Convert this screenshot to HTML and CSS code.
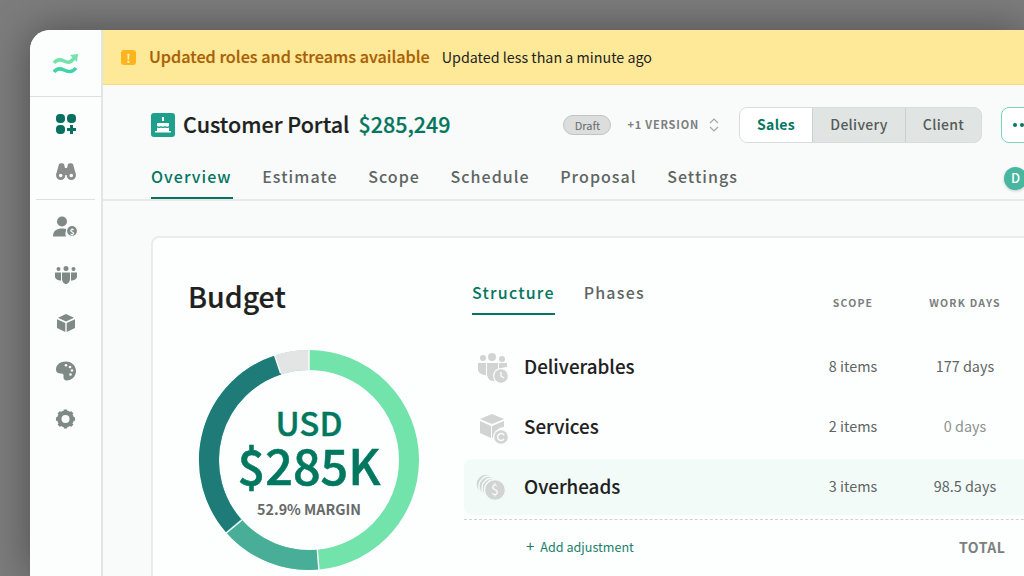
FILE: index.html
```html
<!DOCTYPE html>
<html>
	<head>
		<meta charset="UTF-8">
		<title>Customer Portal</title>
		<link rel="stylesheet" href="styles.css">
	</head>
	<body>
		<div class="window">
			<div class="side">
				<div class="logo">
					<svg width="26" height="22" viewBox="0 0 26 22" fill="none" stroke-width="3.6"><path d="M1 9c3-4 6-4 10-2s7 2 10-3" stroke="#74e2ab"/><path d="M17 1l8-1-1 8z" fill="#74e2ab" stroke="none"/><path d="M1 18c3-4 6-4 10-2s8 3 12-2" stroke="#3fd3aa"/></svg>
				</div>
				<div class="side-group">
					<svg width="20" height="20" viewBox="0 0 20 20" fill="#07705f"><rect x="0" y="0" width="9" height="9" rx="4"/><rect x="11" y="0" width="9" height="9" rx="4"/><rect x="0" y="11" width="9" height="9" rx="4"/><path d="M14 11h3v3h3v3h-3v3h-3v-3h-3v-3h3z"/></svg>
					<svg width="20" height="18" viewBox="0 0 20 18" fill="#8a8d8c"><path d="M3 1c1-1 4-1 5 0l1 4h2l1-4c1-1 4-1 5 0l3 11H0z"/><circle cx="4.700" cy="12.500" r="3.200" fill="#fbfdfd" stroke="#8a8d8c" stroke-width="2.800"/><circle cx="15.300" cy="12.500" r="3.200" fill="#fbfdfd" stroke="#8a8d8c" stroke-width="2.800"/></svg>
				</div>
				<div class="side-group lower">
					<svg width="25" height="21" viewBox="0 0 25 21" fill="#7f8a87"><circle cx="9" cy="5" r="5"/><path d="M0 20c0-6 4-8 9-8 2 0 4 .4 5 1-2 2-2 5-1 7z"/><circle cx="19" cy="14.500" r="5.500" stroke="#fbfdfd" stroke-width="1.200"/><text x="19" y="18" class="mini">$</text></svg>
					<svg width="22" height="18" viewBox="0 0 22 18" fill="#7f8a87"><circle cx="3.500" cy="3" r="2"/><circle cx="11" cy="2.500" r="2.500"/><circle cx="18.500" cy="3" r="2"/><path d="M0 6.500h6v8C3 14.500 0 13 0 10.500zM7 6.500h8V13c0 2.500-2 5-4 5s-4-2.500-4-5zM16 6.500h6v4c0 2.500-3 4-6 4z"/></svg>
					<svg width="18" height="18" viewBox="0 0 18 18" fill="#7f8a87"><path d="M9 0l8 3.700-8 3.700-8-3.700z"/><path d="M0 5.200l8.300 3.800V18L0 14zM18 5.200L9.700 9v9l8.300-4z"/></svg>
					<svg width="20" height="19" viewBox="0 0 20 19"><path d="M10 0C4 0 0 3.500 0 8c0 3 2.500 4 5 4 2 0 3 1 2.500 3-.4 2 1 4 3 4 5.500 0 9.500-4.500 9.500-9.500S16 0 10 0z" fill="#7f8a87"/><g fill="#fbfdfd"><circle cx="10" cy="3.800" r="1.300"/><circle cx="14" cy="5.500" r="1.300"/><circle cx="16" cy="9" r="1.300"/><circle cx="14.500" cy="13" r="1.300"/></g></svg>
					<svg width="21" height="21" viewBox="0 0 22 22"><circle cx="11" cy="11" r="6.500" fill="none" stroke="#7f8a87" stroke-width="4.600"/><path d="M11 1v4M11 17v4M1 11h4M17 11h4M3.900 3.900l2.800 2.800M15.300 15.300l2.800 2.800M3.900 18.100l2.800-2.800M15.300 6.700l2.800-2.800" stroke="#7f8a87" stroke-width="3.600"/></svg>
				</div>
			</div>
			<div class="main">
				<div class="notice">
					<span class="notice-icon">!</span>
					<b>Updated roles and streams available</b>
					<span class="notice-time">Updated less than a minute ago</span>
				</div>
				<div class="head">
					<div class="title-row">
						<span class="project-icon">
							<svg width="16" height="16" viewBox="0 0 16 16" fill="#fff"><rect x="7" y="0" width="2" height="4"/><path d="M2 6h12v3c-1.500 1-2.500 1-4 0-1 1-3 1-4 0-1.500 1-2.500 1-4 0z"/><path d="M2 10.500c1.500.8 2.800.8 4 0 1.200.8 2.800.8 4 0 1.200.8 2.500.8 4 0V14H2z"/><rect x="0" y="14" width="16" height="1.500"/></svg>
						</span>
						<span class="project-name">Customer Portal</span>
						<span class="project-price">$285,249</span>
						<span class="spacer"></span>
						<span class="draft">Draft</span>
						<span class="version">+1 VERSION</span>
						<svg class="updown" width="10" height="14" viewBox="0 0 10 14" fill="none" stroke="#a3a8a6" stroke-width="1.200"><path d="M1 5l4-4 4 4M1 9l4 4 4-4"/></svg>
						<div class="switch">
							<span class="on">Sales</span>
							<span>Delivery</span>
							<span>Client</span>
						</div>
						<div class="more"><i></i><i></i><i></i></div>
					</div>
					<div class="tabs">
						<a class="active">Overview</a>
						<a>Estimate</a>
						<a>Scope</a>
						<a>Schedule</a>
						<a>Proposal</a>
						<a>Settings</a>
						<span class="avatar">D</span>
					</div>
				</div>
				<div class="content">
					<div class="card">
						<div class="budget">
							<h1>Budget</h1>
							<div class="donut">
								<svg width="220" height="220" viewBox="0 0 220 220" fill="none" stroke-width="20">
									<circle cx="110" cy="110" r="100" stroke="#72e3aa"/>
									<path d="M118.700 209.600A100 100 0 0 1 34.500 175.600" stroke="#48ae98"/>
									<path d="M34.500 175.600A100 100 0 0 1 79 14.900" stroke="#1f7b78"/>
									<path d="M79 14.900A100 100 0 0 1 110 10" stroke="#e3e5e4"/>
									<path d="M110 -1V21M118.300 199.500L120 221M43 170L26 184M81.500 23L75.500 5" stroke="#fbfdfd" stroke-width="1.400"/>
								</svg>
								<div class="donut-text">
									<div class="usd">USD</div>
									<div class="total">$285K</div>
									<div class="margin">52.9% MARGIN</div>
								</div>
							</div>
						</div>
						<div class="table">
							<div class="table-top">
								<div class="subtabs">
									<a class="active">Structure</a>
									<a>Phases</a>
								</div>
								<div class="col">SCOPE</div>
								<div class="col">WORK DAYS</div>
							</div>
							<div class="row">
								<svg class="row-icon" width="34" height="36" viewBox="0 0 34 36" fill="#d1d4d3"><circle cx="7" cy="8" r="3"/><circle cx="16" cy="7" r="4"/><circle cx="26" cy="9" r="3"/><path d="M2 13h8v12c-4 0-8-2-8-6zM11 13h11v14c-1 2-2 4-5 4-4 0-6-4-6-8zM23 13h8v4c-3 0-6 1-8 3z"/><circle cx="25" cy="26" r="8" fill="#fbfdfd"/><circle cx="25" cy="26" r="6.800"/><path d="M25 22v4l3 2" stroke="#fbfdfd" stroke-width="1.400" fill="none"/></svg>
								<span class="row-name">Deliverables</span>
								<span class="cell">8 items</span>
								<span class="cell">177 days</span>
							</div>
							<div class="row">
								<svg class="row-icon" width="34" height="36" viewBox="0 0 34 36" fill="#d1d4d3"><path d="M16 4l12 5-12 5-12-5z"/><path d="M4 11l11 5v12l-11-5zM28 11v6c-5 0-9 4-10 10l-2 1V16z"/><circle cx="25" cy="27" r="8" fill="#fbfdfd"/><circle cx="25" cy="27" r="6.800"/><path d="M28 25a3.500 3.500 0 1 0 0 4" stroke="#fbfdfd" stroke-width="1.400" fill="none"/></svg>
								<span class="row-name">Services</span>
								<span class="cell">2 items</span>
								<span class="cell dim">0 days</span>
							</div>
							<div class="row hi">
								<svg class="row-icon" width="34" height="36" viewBox="0 0 34 36" fill="#d1d4d3" stroke="#f3fbf9" stroke-width="1.400"><circle cx="10" cy="13" r="10"/><circle cx="13" cy="15" r="10"/><circle cx="16" cy="17" r="10"/><circle cx="19" cy="19" r="10.500"/><text x="19" y="24" class="mini big">$</text></svg>
								<span class="row-name">Overheads</span>
								<span class="cell">3 items</span>
								<span class="cell">98.5 days</span>
							</div>
							<div class="foot">
								<a class="add"><em>+</em>Add adjustment</a>
								<span class="total-label">TOTAL</span>
							</div>
						</div>
					</div>
				</div>
			</div>
		</div>
	</body>
</html>
```

FILE: styles.css
```css
* {margin: 0; padding: 0; box-sizing: border-box;}
html, body {height: 100%; overflow: hidden;}
body {
	background: #7c7c7c;
	padding: 30px 0 0 30px;
	font-family: "Noto Sans CJK SC", "Noto Sans", sans-serif;
	color: #1d2221;
}
.window {
	display: flex;
	width: 994px;
	height: 546px;
	background: #f8fbfa;
	border-radius: 20px 0 0 0;
	overflow: hidden;
	box-shadow: 0 0 40px rgba(0,0,0,.38);
}
.side {
	flex: none;
	width: 73px;
	border-right: 2px solid #e1e5e4;
	background: #fcfefe;
}
.logo {
	height: 67px;
	border-bottom: 1px solid #dcdfde;
	display: flex;
	align-items: center;
	justify-content: center;
	padding-top: 3px;
}
.side-group {
	display: flex;
	flex-direction: column;
	align-items: center;
	margin: 0 6px;
	padding: 3px 0;
	border-bottom: 1px solid #dcdfde;
}
.side-group svg {height: 48px; flex: none;}
.side-group.lower {border-bottom: none;}
.main {flex: 1; min-width: 0;}
.notice {
	display: flex;
	align-items: center;
	height: 55px;
	padding-left: 18px;
	background: #fee998;
	border-bottom: 1px solid #f8d87a;
	font-size: 14.300px;
}
.notice-icon {
	width: 15px;
	height: 15px;
	border-radius: 3px;
	background: #fdb51f;
	color: #fff3c4;
	font-size: 12px;
	font-weight: 700;
	line-height: 15px;
	text-align: center;
	margin-right: 13px;
}
.notice b {
	color: #a85f06;
	font-size: 16.200px;
	font-weight: 500;
	margin: 0 12px 2px 0;
	-webkit-text-stroke: .2px;
}
.notice-time {margin-bottom: 2px;}
.head {
	padding: 21px 0 0 48px;
	border-bottom: 2px solid #e6e9e8;
	height: 116px;
}
.title-row {
	display: flex;
	align-items: center;
	width: 894px;
	height: 38px;
}
.project-icon {
	width: 24px;
	height: 24px;
	border-radius: 3px;
	background: #1fa08c;
	display: flex;
	align-items: center;
	justify-content: center;
	margin-right: 8px;
}
.project-name {font-size: 21.500px; font-weight: 500; margin: 0 9px 4px 0; -webkit-text-stroke: .2px;}
.project-price {font-size: 21.500px; font-weight: 500; color: #04765f; margin-bottom: 4px; -webkit-text-stroke: .2px;}
.spacer {flex: 1;}
.draft {
	width: 48px;
	height: 20px;
	border-radius: 10px;
	border: 1px solid #bfc3c2;
	background: #dcdedd;
	color: #666b69;
	font-size: 11px;
	line-height: 18px;
	text-align: center;
	margin-right: 16px;
}
.version {
	color: #7b807e;
	font-size: 11px;
	font-weight: 700;
	letter-spacing: .8px;
	margin: 0 10px 2px 0;
}
.updown {margin-right: 20px;}
.switch {
	display: flex;
	width: 243px;
	height: 36px;
	border: 1px solid #d8dddb;
	border-radius: 8px;
	overflow: hidden;
	background: #e0e4e2;
	font-size: 14px;
	font-weight: 500;
	color: #555b59;
	letter-spacing: .3px;
}
.switch span {
	display: flex;
	align-items: center;
	justify-content: center;
	flex: 93;
	padding-bottom: 2px;
	border-left: 1px solid #ccd1cf;
}
.switch .on {flex: 73; border-left: none; background: #fff; color: #04765f; font-weight: 700;}
.switch span:last-child {flex: 76;}
.more {
	flex: none;
	display: flex;
	align-items: center;
	gap: 3px;
	width: 44px;
	height: 36px;
	margin-left: 19px;
	padding-left: 11px;
	background: #fff;
	border: 1px solid #7bd5bb;
	border-radius: 8px;
}
.more i {width: 4px; height: 4px; border-radius: 50%; background: #04765f;}
.tabs {
	display: flex;
	gap: 29.500px;
	margin-top: 13px;
	width: 900px;
	position: relative;
	font-size: 16px;
	font-weight: 500;
	letter-spacing: 1.050px;
	color: #5f6563;
}
.tabs a {height: 42px; line-height: 38px; padding-right: 1px;}
.tabs .active {color: #04765f; border-bottom: 2px solid #04765f;}
.avatar {
	position: absolute;
	left: 853px;
	top: 10px;
	width: 23px;
	height: 23px;
	border-radius: 50%;
	background: #48b7a0;
	color: #fff;
	font-size: 13px;
	line-height: 22px;
	text-align: center;
	letter-spacing: 0;
	box-shadow: 0 1px 3px rgba(0,0,0,.2);
}
.content {padding: 35px 0 0 48px;}
.card {
	display: flex;
	width: 1000px;
	height: 500px;
	background: #fdfefe;
	border: 2px solid #e9ecea;
	border-radius: 8px;
	padding: 35px 0 0 35px;
}
.budget {flex: none; width: 276px;}
h1 {font-size: 28.500px; font-weight: 500; line-height: 46px; -webkit-text-stroke: .2px;}
.donut {position: relative; width: 220px; height: 220px; margin: 31px 0 0 11px;}
.donut svg {display: block; overflow: visible;}
.donut-text {
	position: absolute;
	inset: 0;
	display: flex;
	flex-direction: column;
	align-items: center;
	color: #007860;
	padding-top: 54px;
}
.usd {font-size: 33px; font-weight: 500; line-height: 36px; -webkit-text-stroke: .4px;}
.total {font-size: 48.500px; font-weight: 500; line-height: 48px; -webkit-text-stroke: .6px;}
.margin {font-size: 14.300px; font-weight: 700; color: #666b69; line-height: 22px; margin-top: 10px;}
.table {flex: none; width: 620px;}
.table-top {display: flex; align-items: flex-start; height: 64px; padding-left: 8px;}
.subtabs {flex: none; display: flex; gap: 29px; width: 333px; font-size: 16px; font-weight: 500; letter-spacing: 1.200px; color: #5f6563;}
.subtabs a {height: 42px; line-height: 38px;}
.subtabs .active {color: #04765f; border-bottom: 2px solid #04765f;}
.col {
	flex: none;
	width: 96px;
	font-size: 10.500px;
	font-weight: 700;
	letter-spacing: 1.200px;
	color: #7b807e;
	line-height: 20px;
	margin-top: 20px;
	text-align: center;
}
.col:last-child {width: 120px; margin-left: 4px;}
.row {display: flex; align-items: center; height: 60px; padding: 0 0 4px 12px; border-radius: 8px;}
.row-icon {flex: none; margin: 6px 14px 0 0;}
.row-name {width: 281px; font-size: 18.800px; font-weight: 500; -webkit-text-stroke: .1px;}
.cell {width: 96px; font-size: 14.400px; color: #5f6563; text-align: center;}
.cell + .cell {width: 120px; margin-left: 4px;}
.cell.dim {color: #8d9290;}
.hi {background: #f3fbf9; height: 56px; margin-top: 2px;}
.hi .row-icon {margin-top: 8px;}
.foot {
	display: flex;
	align-items: center;
	margin-top: 4px;
	height: 56px;
	border-top: 1px dashed #cfd3d2;
	padding: 0 0 4px 62px;
}
.add {flex: none; width: 433px; color: #1a7f6c; font-size: 12.600px;}
.add em {font-style: normal; font-size: 15px; margin-right: 6px;}
.total-label {color: #7b807e; font-size: 14px; font-weight: 700; letter-spacing: .5px; margin-top: 2px;}
.mini {font-size: 8px; fill: #fbfdfd; stroke: none; text-anchor: middle; font-weight: 700;}
.mini.big {font-size: 14px; font-weight: 400;}
```
